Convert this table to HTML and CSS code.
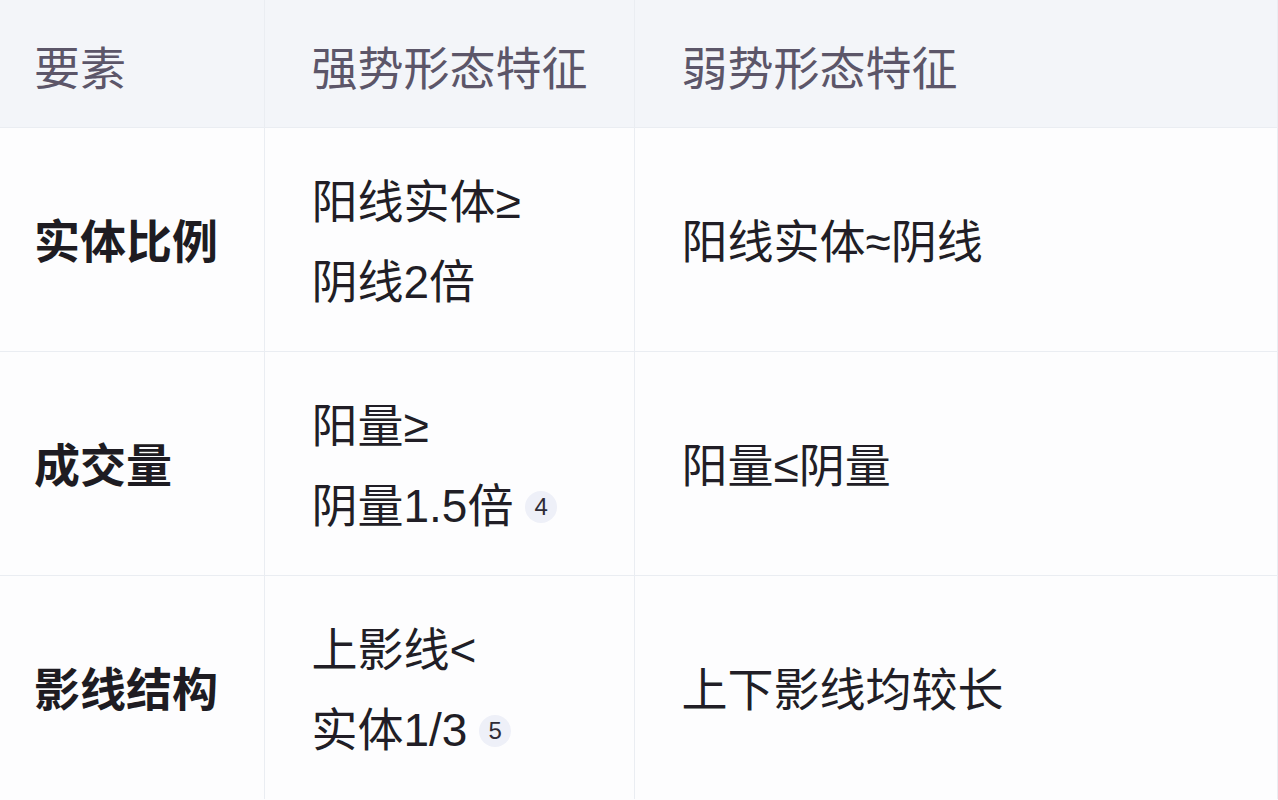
FILE: index.html
```html
<!DOCTYPE html>
<html lang="zh">
<head>
<meta charset="utf-8">
<link rel="stylesheet" href="styles.css">
</head>
<body>
<table class="grid">
  <colgroup>
    <col class="c1"><col class="c2"><col class="c3">
  </colgroup>
  <thead>
    <tr>
      <th class="first">要素</th>
      <th>强势形态特征</th>
      <th>弱势形态特征</th>
    </tr>
  </thead>
  <tbody>
    <tr>
      <td class="first label">实体比例</td>
      <td>阳线实体≥<br>阴线2倍</td>
      <td>阳线实体≈阴线</td>
    </tr>
    <tr>
      <td class="first label">成交量</td>
      <td>阳量≥<br>阴量1.5倍 <span class="cite">4</span></td>
      <td>阳量≤阴量</td>
    </tr>
    <tr>
      <td class="first label">影线结构</td>
      <td>上影线&lt;<br>实体1/3 <span class="cite">5</span></td>
      <td>上下影线均较长</td>
    </tr>
  </tbody>
</table>
</body>
</html>
```

FILE: styles.css
```css
html, body {
  margin: 0;
  padding: 0;
  background: #fdfdfe;
}
body {
  font-family: "Liberation Sans", "Noto Sans CJK SC", sans-serif;
  color: #211e26;
}
.grid {
  width: 1277px;
  border-collapse: collapse;
  table-layout: fixed;
}
.c1 { width: 264px; }
.c2 { width: 370px; }
.c3 { width: 643px; }
.grid th, .grid td {
  border: 1px solid #eaedf2;
  text-align: left;
  vertical-align: middle;
  padding: 0 0 0 47px;
  font-size: 46px;
}
.grid th.first, .grid td.first {
  padding-left: 34px;
  border-left: none;
}
.grid tr:first-child th { border-top: none; }
.grid tr:last-child td { border-bottom: none; }
.grid th {
  height: 125px;
  padding-top: 2px;
  background: #f3f5f9;
  font-weight: normal;
  color: #5c5669;
}
.grid td {
  height: 218px;
  line-height: 80px;
  padding-top: 5px;
  background: #fdfdfe;
}
.grid td.label {
  font-weight: bold;
  color: #1e1c22;
}
.cite {
  display: inline-block;
  width: 32px;
  height: 32px;
  line-height: 32px;
  border-radius: 50%;
  background: #eef0f8;
  text-align: center;
  font-size: 24px;
  color: #2f2c36;
  vertical-align: 7px;
  margin-left: -1px;
}
```
